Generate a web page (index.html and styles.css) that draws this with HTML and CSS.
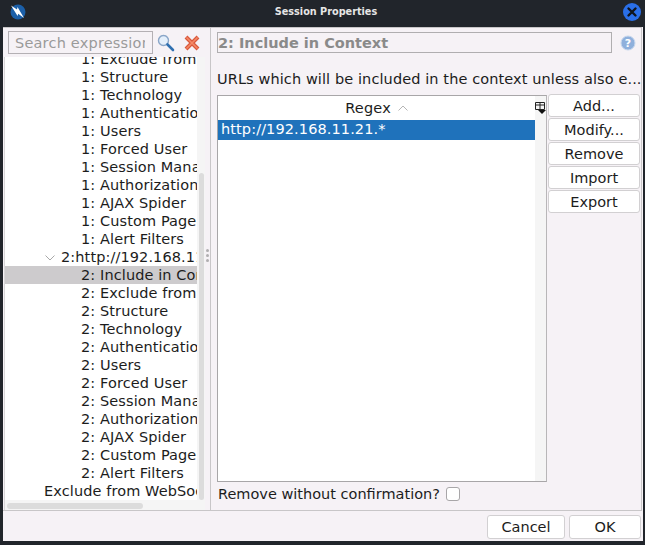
FILE: index.html
```html
<!DOCTYPE html>
<html lang="en">
<head>
    <meta charset="UTF-8">
    <title>Session Properties</title>
    <link rel="stylesheet" href="styles.css">
</head>
<body>
    <div class="window">
        <div class="titlebar">
            <svg class="app-icon" width="16" height="16" viewBox="0 0 16 16">
                <circle cx="8" cy="8" r="7.5" fill="#1b5fa8"/>
                <path d="M1 1.5 L7 5.5 L7.5 3 L14 14 L8.2 9.8 L7.6 12 Z" fill="#fff"/>
            </svg>
            <span class="title">Session Properties</span>
            <span class="close-btn">
                <svg width="18" height="18" viewBox="0 0 18 18">
                    <circle cx="9" cy="9" r="9" fill="#2a6fe8"/>
                    <path d="M5.5 5.5 L12.5 12.5 M12.5 5.5 L5.5 12.5" stroke="#10151c" stroke-width="2.4" stroke-linecap="round"/>
                </svg>
            </span>
        </div>

        <div class="dialog">
            <div class="main">
                <!-- Left side: search box and context tree -->
                <div class="left-pane">
                    <div class="search-row">
                        <input class="search-input" type="text" placeholder="Search expression">
                        <svg class="search-icon" width="18" height="18" viewBox="0 0 18 18">
                            <circle cx="6.5" cy="6.5" r="5" fill="#e4effb" stroke="#8aa6c8" stroke-width="1.4"/>
                            <path d="M10.5 10.5 L16 16" stroke="#2f6fb0" stroke-width="2.6" stroke-linecap="round"/>
                        </svg>
                        <svg class="clear-icon" width="16" height="16" viewBox="0 0 16 16">
                            <path d="M2 2 L14 14 M14 2 L2 14" stroke="#d9583c" stroke-width="4"/>
                            <path d="M2.5 2.5 L13.5 13.5 M13.5 2.5 L2.5 13.5" stroke="#f58a68" stroke-width="1.6"/>
                        </svg>
                    </div>
                    <div class="tree-area">
                        <div class="tree">
                            <div class="tree-list">
                                <div class="node first">1: Exclude from</div>
                                <div class="node">1: Structure</div>
                                <div class="node">1: Technology</div>
                                <div class="node">1: Authenticatio</div>
                                <div class="node">1: Users</div>
                                <div class="node">1: Forced User</div>
                                <div class="node">1: Session Mana</div>
                                <div class="node">1: Authorization</div>
                                <div class="node">1: AJAX Spider</div>
                                <div class="node">1: Custom Page</div>
                                <div class="node">1: Alert Filters</div>
                                <div class="node parent">
                                    <svg class="arrow" width="10" height="6" viewBox="0 0 10 6"><path d="M0.5 0.5 L5 5 L9.5 0.5" fill="none" stroke="#a8a8a8"/></svg>
                                    2:http://192.168.11.21
                                </div>
                                <div class="node selected">2: Include in Context</div>
                                <div class="node">2: Exclude from</div>
                                <div class="node">2: Structure</div>
                                <div class="node">2: Technology</div>
                                <div class="node">2: Authenticatio</div>
                                <div class="node">2: Users</div>
                                <div class="node">2: Forced User</div>
                                <div class="node">2: Session Mana</div>
                                <div class="node">2: Authorization</div>
                                <div class="node">2: AJAX Spider</div>
                                <div class="node">2: Custom Page</div>
                                <div class="node">2: Alert Filters</div>
                                <div class="node top">Exclude from WebSockets</div>
                            </div>
                            <div class="vscroll"><div class="vthumb"></div></div>
                        </div>
                        <div class="hscroll"><div class="hthumb"></div></div>
                    </div>
                </div>

                <div class="divider"><span></span><span></span><span></span></div>

                <!-- Right side: the selected panel -->
                <div class="right-pane">
                    <div class="panel-head">
                        <div class="panel-title">2: Include in Context</div>
                        <svg class="help-icon" width="16" height="16" viewBox="0 0 16 16">
                            <circle cx="8" cy="8" r="7" fill="#8fb0dc" stroke="#c8d8ee"/>
                            <text x="8" y="12" text-anchor="middle" class="help-mark">?</text>
                        </svg>
                    </div>
                    <div class="panel-desc">URLs which will be included in the context unless also e...</div>
                    <div class="table-row">
                        <div class="table">
                            <div class="table-main">
                                <div class="table-head">
                                    Regex
                                    <svg class="sort" width="10" height="6" viewBox="0 0 10 6"><path d="M0.5 5.5 L5 1 L9.5 5.5" fill="none" stroke="#b5b5b5"/></svg>
                                </div>
                                <div class="table-cell">http://192.168.11.21.*</div>
                            </div>
                            <div class="table-side">
                                <svg class="col-icon" width="11" height="13" viewBox="0 0 11 13">
                                    <path d="M0.5 1.5 H9.5 V8.5 H0.5 Z M0.5 4 H9.5 M5 1.5 V8.5" fill="none" stroke="#222"/>
                                    <path d="M3 9 H11 L7 13 Z" fill="#111"/>
                                </svg>
                            </div>
                        </div>
                        <div class="side-buttons">
                            <button class="btn">Add...</button>
                            <button class="btn">Modify...</button>
                            <button class="btn">Remove</button>
                            <button class="btn">Import</button>
                            <button class="btn">Export</button>
                        </div>
                    </div>
                    <div class="confirm-row">
                        <span>Remove without confirmation?</span>
                        <span class="checkbox"></span>
                    </div>
                </div>
            </div>

            <div class="footer">
                <button class="btn footer-btn cancel">Cancel</button>
                <button class="btn footer-btn ok">OK</button>
            </div>
        </div>
    </div>
</body>
</html>
```

FILE: styles.css
```css
* {
    box-sizing: border-box;
    margin: 0;
    padding: 0;
}

body {
    font-family: "DejaVu Sans", sans-serif;
    font-size: 14.5px;
    color: #1c1c1c;
    background: #21252b;
    overflow: hidden;
}

.window {
    width: 645px;
    height: 545px;
    display: flex;
    flex-direction: column;
}

/* Title bar */
.titlebar {
    height: 27px;
    flex: none;
    display: flex;
    align-items: center;
    position: relative;
    padding: 0 4px 3px 10px;
    background: #21252b;
}

.title {
    position: absolute;
    left: 7px;
    right: 0;
    top: 6px;
    text-align: center;
    color: #e6e6e6;
    font-size: 9.7px;
    font-weight: bold;
}

.close-btn {
    margin-left: auto;
    height: 18px;
    position: relative;
}

/* Dialog body */
.dialog {
    flex: 1;
    margin: 0 2px 4px 3px;
    background: #f6f2f6;
    display: flex;
    flex-direction: column;
    min-height: 0;
}

.main {
    height: 484px;
    flex: none;
    display: flex;
    margin-right: 1px;
    border-top: 1px solid #c8c6c8;
    border-bottom: 1px solid #c8c6c8;
    border-right: 1px solid #c8c6c8;
}

.left-pane {
    width: 202px;
    flex: none;
    display: flex;
    flex-direction: column;
}

.search-row {
    height: 29px;
    flex: none;
    display: flex;
    align-items: center;
    padding: 0 0 0 5px;
}

.search-input {
    width: 145px;
    height: 23px;
    padding: 0 7px 0 6px;
    border: 1px solid #b4b0b4;
    background: #f6f2f6;
    font-family: inherit;
    font-size: 14.5px;
    color: #1c1c1c;
}

.search-input::placeholder {
    color: #9a9a9a;
    opacity: 1;
    letter-spacing: 0.2px;
}

.search-icon {
    margin-left: 4px;
}

.clear-icon {
    margin-left: 9px;
}

.tree-area {
    flex: 1;
    min-height: 0;
    margin-left: 1px;
    display: flex;
    flex-direction: column;
    background: #f5f5f5;
    border-left: 1px solid #d8d6d8;
}

.tree {
    flex: 1;
    min-height: 0;
    display: flex;
}

.tree-list {
    width: 192px;
    overflow: hidden;
    background: #fff;
}

.node {
    height: 18px;
    line-height: 18px;
    padding-left: 76px;
    white-space: nowrap;
    letter-spacing: 0.1px;
}

.node.first {
    margin-top: -7px;
}

.node.parent {
    padding-left: 56px;
    position: relative;
}

.node.top {
    padding-left: 39px;
}

.node.selected {
    background: #cdcbcd;
}

.arrow {
    position: absolute;
    left: 40px;
    top: 7px;
}

.vscroll {
    width: 8px;
    position: relative;
}

.vthumb {
    position: absolute;
    left: 2px;
    top: 116px;
    width: 5px;
    height: 327px;
    background: #dcdcdc;
    border-radius: 3px;
}

.hscroll {
    height: 10px;
    flex: none;
    padding: 3px 0 0 2px;
}

.hthumb {
    width: 136px;
    height: 6px;
    background: #dcdcdc;
    border-radius: 3px;
}

.divider {
    width: 6px;
    flex: none;
    display: flex;
    flex-direction: column;
    justify-content: center;
    align-items: center;
    gap: 2px;
    padding-bottom: 27px;
    border-right: 1px solid #c8c6c8;
}

.divider span {
    width: 3px;
    height: 3px;
    background: #b0aeb0;
    border-radius: 50%;
}

.right-pane {
    flex: 1;
    min-width: 0;
    display: flex;
    flex-direction: column;
    padding: 4px 0 0 6px;
}

.panel-head {
    height: 21px;
    flex: none;
    display: flex;
    align-items: center;
    gap: 8px;
}

.panel-title {
    width: 395px;
    height: 21px;
    line-height: 21px;
    border: 1px solid #b0aeb0;
    font-weight: bold;
    color: #8a8a8a;
}

.help-mark {
    font-size: 11px;
    font-weight: bold;
    fill: #fff;
}

.panel-desc {
    margin-top: 17px;
    height: 18px;
    line-height: 18px;
    white-space: nowrap;
    letter-spacing: 0.1px;
}

.table-row {
    margin-top: 7px;
    display: flex;
    align-items: flex-start;
}

.table {
    width: 330px;
    height: 387px;
    flex: none;
    display: flex;
    border: 1px solid #a8a6a8;
    border-right-color: #b8b6b8;
    background: #fff;
}

.table-main {
    flex: 1;
}

.table-head {
    height: 24px;
    line-height: 24px;
    text-align: center;
    background: #fff;
    letter-spacing: 0.2px;
}

.sort {
    margin-left: 2px;
    vertical-align: 2px;
}

.table-cell {
    height: 20px;
    line-height: 19px;
    padding-left: 3px;
    background: #1f72bb;
    color: #fff;
    letter-spacing: 0.1px;
}

.table-side {
    width: 11px;
    background: #f5f5f5;
    flex: none;
}

.col-icon {
    display: block;
    margin-top: 5px;
}

.side-buttons {
    flex: 1;
    display: flex;
    flex-direction: column;
    gap: 1px;
    margin-top: -1px;
    padding-left: 1px;
}

.btn {
    display: block;
    height: 23px;
    width: 92px;
    background: #fff;
    border: 1px solid #d2d0d2;
    border-radius: 3px;
    font-family: inherit;
    font-size: 14.5px;
    color: #1c1c1c;
}

.confirm-row {
    margin-top: 3px;
    display: flex;
    align-items: center;
    gap: 6px;
    height: 18px;
    padding-left: 1px;
}

.checkbox {
    width: 14px;
    height: 14px;
    background: #fff;
    border: 1px solid #a8a6a8;
    border-radius: 3px;
}

/* Cancel and OK */
.footer {
    flex: 1;
    display: flex;
    justify-content: flex-end;
    align-items: flex-start;
    gap: 4px;
    padding: 4px 2px 0 0;
}

.footer-btn {
    height: 24px;
}

.cancel {
    width: 78px;
}

.ok {
    width: 72px;
}
```
